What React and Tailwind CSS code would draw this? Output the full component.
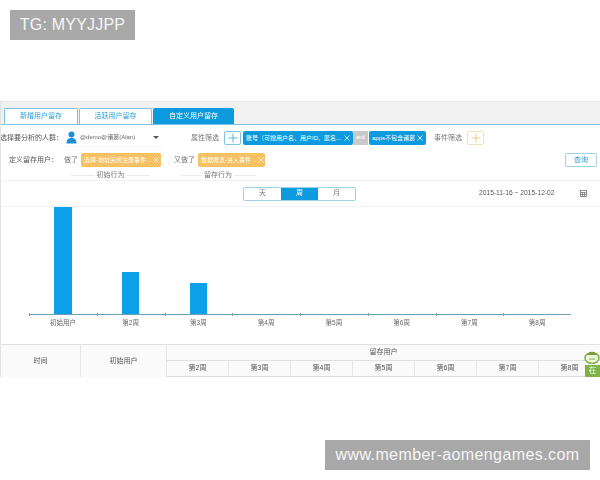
const FONT = "font-['Liberation_Sans','Noto_Sans_CJK_SC',sans-serif]";

function Tag({ color, children, className = "" }) {
  return (
    <span className={`flex h-[14px] shrink-0 items-center justify-between rounded-[2px] px-[3px] whitespace-nowrap text-white ${color} ${className}`}>
      {children}
    </span>
  );
}

function X() {
  return (
    <svg width="6" height="6" viewBox="0 0 6 6" className="ml-[2px] shrink-0" stroke="currentColor" strokeWidth="0.8">
      <path d="M0.500 0.500 5.500 5.500M5.500 0.500 0.500 5.500" />
    </svg>
  );
}

function Plus({ color, className }) {
  return (
    <span className={`flex h-[14px] w-[17px] shrink-0 items-center justify-center rounded-[2px] border ${className}`}>
      <svg width="10" height="10" viewBox="0 0 10 10" stroke={color} strokeWidth="0.9">
        <path d="M5 0.500V9.500M0.500 5H9.500" />
      </svg>
    </span>
  );
}

const weeks = ["第2周", "第3周", "第4周", "第5周", "第6周", "第7周", "第8周"];
const chart = [
  ["初始用户", 107],
  ["第2周", 42],
  ["第3周", 31],
  ["第4周", 0],
  ["第5周", 0],
  ["第6周", 0],
  ["第7周", 0],
  ["第8周", 0],
];

export default function App() {
  return (
    <div className={`relative h-[480px] w-[600px] overflow-hidden bg-white ${FONT}`}>
      <div className="absolute top-[10px] left-[10px] z-10 flex h-[30px] w-[125px] items-center justify-center bg-[#a8a8a8] text-[16px] tracking-[0.2px] text-[#f6f6f6]">
        TG: MYYJJPP
      </div>
      <div className="absolute top-[440px] left-[325px] z-10 flex h-[30px] w-[265px] items-center justify-center bg-[#a8a8a8] text-[16px] tracking-[0.4px] text-[#f6f6f6]">
        www.member-aomengames.com
      </div>

      <div className="pt-[101px] blur-[0.35px]">
        <div className="flex h-[276px] flex-col overflow-hidden border-l border-[#e2e2e2] text-[7px] text-[#666]">
          {/* tab strip */}
          <div className="flex h-[24px] shrink-0 items-end gap-px border-t border-b border-t-[#e8e8e8] border-b-[#7fc4e4] bg-[#f1f1f1] pl-[3px]">
            <div className="flex h-[16px] w-[74px] items-center justify-center rounded-t-[2px] border border-b-0 border-[#7fc4e4] bg-white text-[#2f9fd6]">新增用户留存</div>
            <div className="flex h-[16px] w-[73px] items-center justify-center rounded-t-[2px] border border-b-0 border-[#7fc4e4] bg-white text-[#2f9fd6]">活跃用户留存</div>
            <div className="flex h-[16px] w-[81px] items-center justify-center rounded-t-[2px] bg-[#0d9ade] text-white">自定义用户留存</div>
          </div>

          {/* row 1 */}
          <div className="mt-[4px] flex h-[18px] shrink-0 items-center">
            <span className="w-[62px] shrink-0 -indent-px text-[#555] whitespace-nowrap">选择要分析的人群：</span>
            <div className="flex h-[18px] w-[99px] shrink-0 items-center border-b border-[#f6f6f6] pl-[3px]">
              <svg width="11" height="13" viewBox="0 0 11 13" className="mr-[3px] shrink-0" fill="#1d8fd8">
                <circle cx="5.500" cy="3.500" r="3" />
                <path d="M0.500 12.500C0.500 8 3 7 5.500 7S10.500 8 10.500 12.500Z" />
              </svg>
              <span className="text-[6px] whitespace-nowrap text-[#666]">@demo@诸葛(Alan)</span>
              <span className="mr-[3px] ml-auto h-0 w-0 border-x-[3px] border-t-[3px] border-x-transparent border-t-[#555]" />
            </div>
            <span className="ml-[29px] shrink-0 text-[#777]">属性筛选</span>
            <Plus color="#4da9d8" className="ml-[5px] border-[#7fc4e4]" />
            <Tag color="bg-[#0d9ade]" className="ml-[2px] w-[110px] text-[6px]">账号（可搜用户名、用户ID、匿名...<X /></Tag>
            <span className="flex h-[14px] w-[15px] shrink-0 items-center justify-center bg-[#c9c9c9] text-[5px] text-white">and</span>
            <Tag color="bg-[#0d9ade]" className="ml-px w-[57px] text-[6px]">apps不包含诸葛<X /></Tag>
            <span className="ml-[8px] shrink-0 text-[#777]">事件筛选</span>
            <Plus color="#f0c674" className="ml-[5px] border-[#f3e2b8]" />
          </div>

          {/* row 2 */}
          <div className="mt-[4px] flex h-[18px] shrink-0 items-center">
            <span className="ml-[8px] w-[47px] shrink-0 text-[#555] whitespace-nowrap">定义留存用户：</span>
            <span className="ml-[8px] shrink-0 text-[#777]">做了</span>
            <Tag color="bg-[#f5c162]" className="ml-[3px] w-[80px] text-[6px]">选择-地址完成注册事件...<X /></Tag>
            <span className="ml-[13px] shrink-0 text-[#777]">又做了</span>
            <Tag color="bg-[#f5c162]" className="ml-[3px] w-[67px] text-[6px]">数据概览-进入事件...<X /></Tag>
            <span className="mr-[3px] ml-auto flex h-[14px] w-[32px] items-center justify-center rounded-[2px] border border-[#9fd0e6] text-[#2f9fd6]">查询</span>
          </div>

          {/* behaviour labels */}
          <div className="mt-[2px] flex h-[10px] shrink-0 items-center border-b border-[#f2f2f2] text-[#777]">
            <div className="ml-[70px] flex w-[79px] items-center gap-[2px]">
              <span className="h-px flex-1 bg-[#eaeaea]" />初始行为<span className="h-px flex-1 bg-[#eaeaea]" />
            </div>
            <div className="ml-[30px] flex w-[76px] items-center gap-[2px]">
              <span className="h-px flex-1 bg-[#eaeaea]" />留存行为<span className="h-px flex-1 bg-[#eaeaea]" />
            </div>
          </div>

          {/* period + date */}
          <div className="flex h-[26px] shrink-0 items-center border-b border-[#f2f2f2]">
            <div className="ml-[242px] flex h-[14px] w-[113px] shrink-0 overflow-hidden rounded-[2px] border border-[#9fd0e6]">
              <span className="flex flex-1 items-center justify-center text-[#777]">天</span>
              <span className="flex flex-1 items-center justify-center bg-[#0d9ade] text-white">周</span>
              <span className="flex flex-1 items-center justify-center text-[#777]">月</span>
            </div>
            <span className="ml-[123px] w-[77px] shrink-0 text-[6.700px] whitespace-nowrap text-[#555]">2015-11-16 ~ 2015-12-02</span>
            <svg width="7" height="7" viewBox="0 0 7 7" className="ml-[24px] shrink-0" fill="none" stroke="#777" strokeWidth="0.8">
              <rect x="0.500" y="0.500" width="6" height="6" />
              <path d="M0.500 2.500H6.500M0.500 4.500H6.500M2.500 2.500V6.500M4.500 2.500V6.500" />
            </svg>
          </div>

          {/* chart */}
          <div className="ml-[28px] flex h-[108px] w-[542px] shrink-0 items-end border-b border-[#6f9fb8]">
            {chart.map(([label, h]) => (
              <div key={label} className="flex flex-1 justify-center">
                {h > 0 && <div className="w-[17.500px] bg-[#0ba0e8]" style={{ height: h }} />}
              </div>
            ))}
          </div>
          <div className="ml-[28px] flex h-[29px] w-[542px] shrink-0">
            {chart.map(([label]) => (
              <div key={label} className="relative flex-1 pt-[3px] text-center text-[6.500px] text-[#666]">
                <span className="absolute top-[-2px] left-0 h-[3px] w-px bg-[#6f9fb8]" />
                {label}
              </div>
            ))}
          </div>

          {/* table */}
          <div className="flex h-[33px] shrink-0 border-t border-[#e2e2e2] bg-[#fafafa] text-[#555]">
            <div className="flex w-[80px] shrink-0 items-center justify-center border-r border-[#e6e6e6]">时间</div>
            <div className="flex w-[86px] shrink-0 items-center justify-center border-r border-[#e6e6e6]">初始用户</div>
            <div className="flex min-w-0 flex-1 flex-col">
              <div className="flex h-[16px] items-center justify-center border-b border-[#e2e2e2]">留存用户</div>
              <div className="flex flex-1 border-b border-[#dcdcdc]">
                {weeks.map((w, i) => (
                  <div key={w} className={`flex flex-1 items-center justify-center ${i < 6 ? "border-r border-[#e6e6e6]" : ""}`}>{w}</div>
                ))}
              </div>
            </div>
          </div>
        </div>
      </div>

      {/* floating chat widget */}
      <div className="absolute top-[350px] left-[584px] flex w-[16px] flex-col items-center blur-[0.3px]">
        <svg width="16" height="14" viewBox="0 0 16 14">
          <ellipse cx="8" cy="8" rx="7" ry="5.500" fill="#eef5dc" stroke="#7cb342" strokeWidth="1.500" />
          <path d="M3 5C5 1 11 1 13 5Z" fill="#7f9a3a" />
          <path d="M5 9H11" stroke="#7cb342" strokeWidth="1" />
        </svg>
        <div className="mt-px flex h-[12px] w-[15px] items-start justify-center self-end overflow-hidden bg-[#7cb342] pt-[2px] text-[8px] leading-none text-white">在</div>
      </div>
    </div>
  );
}
